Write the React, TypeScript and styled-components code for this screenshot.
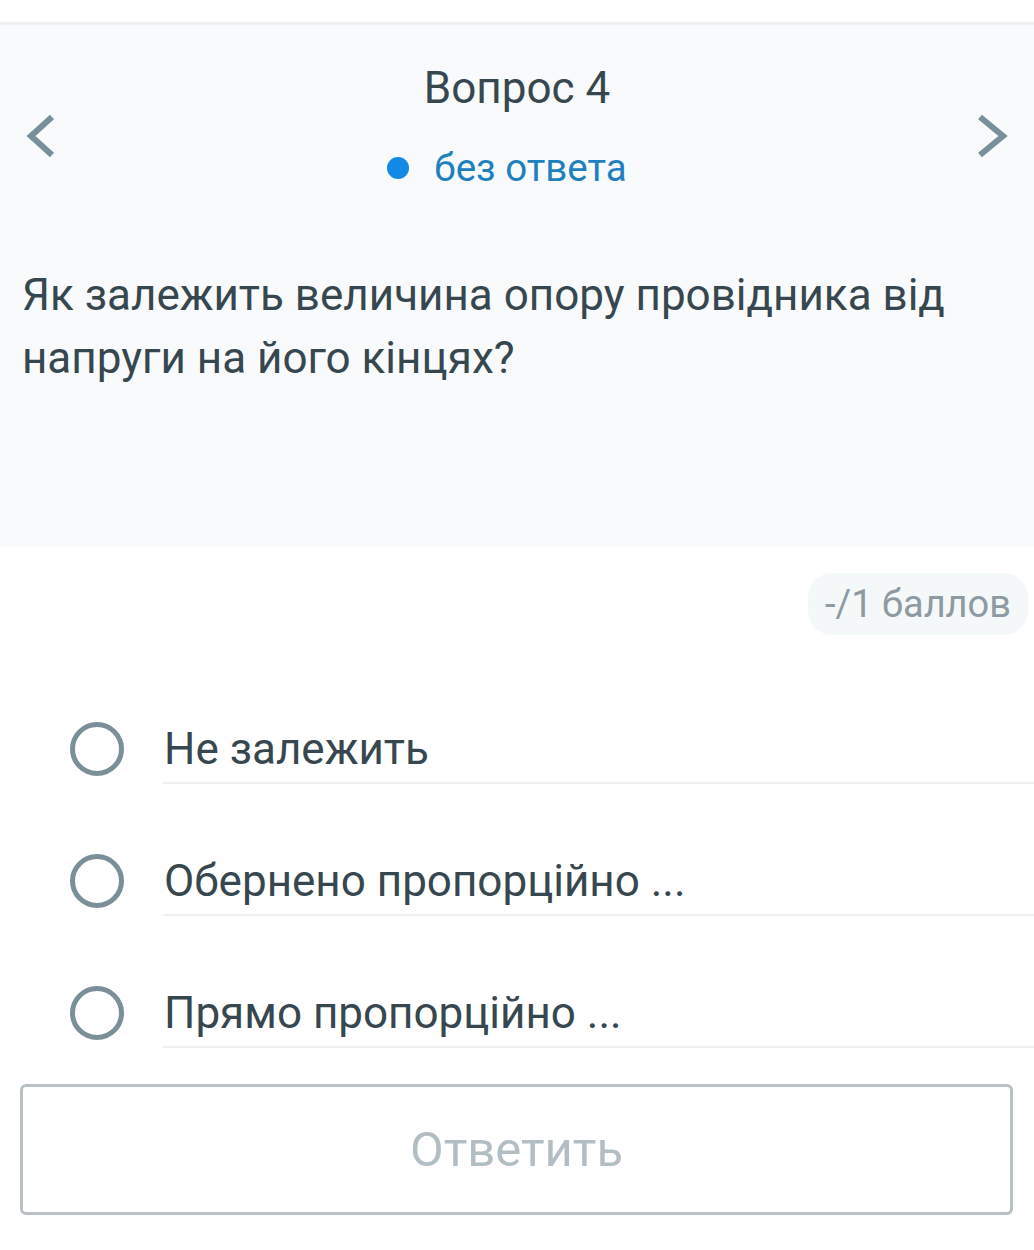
import React from "react";
import styled, { createGlobalStyle } from "styled-components";

const Global = createGlobalStyle`
  html, body { margin: 0; padding: 0; background: #ffffff; }
  body { font-family: Roboto, "Noto Sans", "Liberation Sans", sans-serif; }
  * { box-sizing: border-box; }
`;

const Page = styled.div`
  width: 1034px;
  min-height: 1250px;
  background: #ffffff;
  display: flex;
  flex-direction: column;
`;

const TopStrip = styled.div`
  height: 25px;
  border-bottom: 3px solid #eef0f2;
  background: #ffffff;
`;

const Panel = styled.section`
  background: #f8fafb;
  height: 522px;
  padding-top: 39px;
  display: flex;
  flex-direction: column;
`;

const HeaderRow = styled.div`
  display: flex;
  align-items: center;
  justify-content: space-between;
  padding: 0 20px;
`;

const NavButton = styled.button`
  width: 40px;
  height: 48px;
  margin-top: 16px;
  padding: 0;
  border: none;
  background: transparent;
  display: flex;
  align-items: center;
  justify-content: center;
  cursor: pointer;
`;

const Center = styled.div`
  display: flex;
  flex-direction: column;
  align-items: center;
  gap: 32px;
`;

const Title = styled.h1`
  margin: 0;
  font-size: 44px;
  line-height: 48px;
  font-weight: 400;
  color: #37474f;
`;

const Status = styled.div`
  display: flex;
  align-items: center;
  gap: 25px;
  font-size: 38.5px;
  line-height: 48px;
  color: #1e80be;
  margin-left: -20px;
`;

const Dot = styled.span`
  width: 22px;
  height: 22px;
  border-radius: 50%;
  background: #1389e6;
`;

const Question = styled.p`
  margin: 72px 0 0;
  padding: 0 22px;
  font-size: 44px;
  line-height: 63px;
  color: #37474f;
`;

const ScoreRow = styled.div`
  display: flex;
  justify-content: flex-end;
  padding: 26px 6px 0 0;
`;

const ScorePill = styled.div`
  background: #f5f8f9;
  border-radius: 24px;
  padding: 0 17px;
  height: 62px;
  line-height: 62px;
  font-size: 38px;
  color: #8d9aa1;
`;

const Options = styled.div`
  margin-top: 87px;
  display: flex;
  flex-direction: column;
  gap: 70px;
`;

const OptionRow = styled.label`
  display: grid;
  grid-template-columns: 163px 1fr;
  align-items: start;
  cursor: pointer;
`;

const Radio = styled.span`
  margin-left: 70px;
  width: 54px;
  height: 54px;
  border-radius: 50%;
  border: 5px solid #7b8f99;
  background: #ffffff;
`;

const OptionText = styled.span`
  font-size: 44px;
  line-height: 54px;
  color: #37474f;
  padding: 0 0 6px 1px;
  border-bottom: 2px solid #eef0f2;
`;

const SubmitButton = styled.button`
  margin: 36px 21px 0 20px;
  height: 131px;
  border: 3px solid #b9c0c4;
  border-radius: 6px;
  background: #ffffff;
  font-family: Roboto, "Noto Sans", "Liberation Sans", sans-serif;
  font-size: 49px;
  color: #b3bec4;
  cursor: default;
`;

const Chevron = ({ dir }: { dir: "left" | "right" }) => (
  <svg width="40" height="48" viewBox="0 0 40 48">
    <polyline
      points={dir === "left" ? "32,5 11,24 32,43" : "6,5 29,24 6,43"}
      fill="none"
      stroke="#78909c"
      strokeWidth="6"
      strokeLinecap="butt"
      strokeLinejoin="miter"
    />
  </svg>
);

const options = ["Не залежить", "Обернено пропорційно ...", "Прямо пропорційно ..."];

export default function App() {
  return (
    <Page>
      <Global />
      <TopStrip />
      <Panel>
        <HeaderRow>
          <NavButton aria-label="prev">
            <Chevron dir="left" />
          </NavButton>
          <Center>
            <Title>Вопрос 4</Title>
            <Status>
              <Dot />
              без ответа
            </Status>
          </Center>
          <NavButton aria-label="next">
            <Chevron dir="right" />
          </NavButton>
        </HeaderRow>
        <Question>Як залежить величина опору провідника від напруги на його кінцях?</Question>
      </Panel>
      <ScoreRow>
        <ScorePill>-/1 баллов</ScorePill>
      </ScoreRow>
      <Options>
        {options.map((o) => (
          <OptionRow key={o}>
            <Radio />
            <OptionText>{o}</OptionText>
          </OptionRow>
        ))}
      </Options>
      <SubmitButton>Ответить</SubmitButton>
    </Page>
  );
}
